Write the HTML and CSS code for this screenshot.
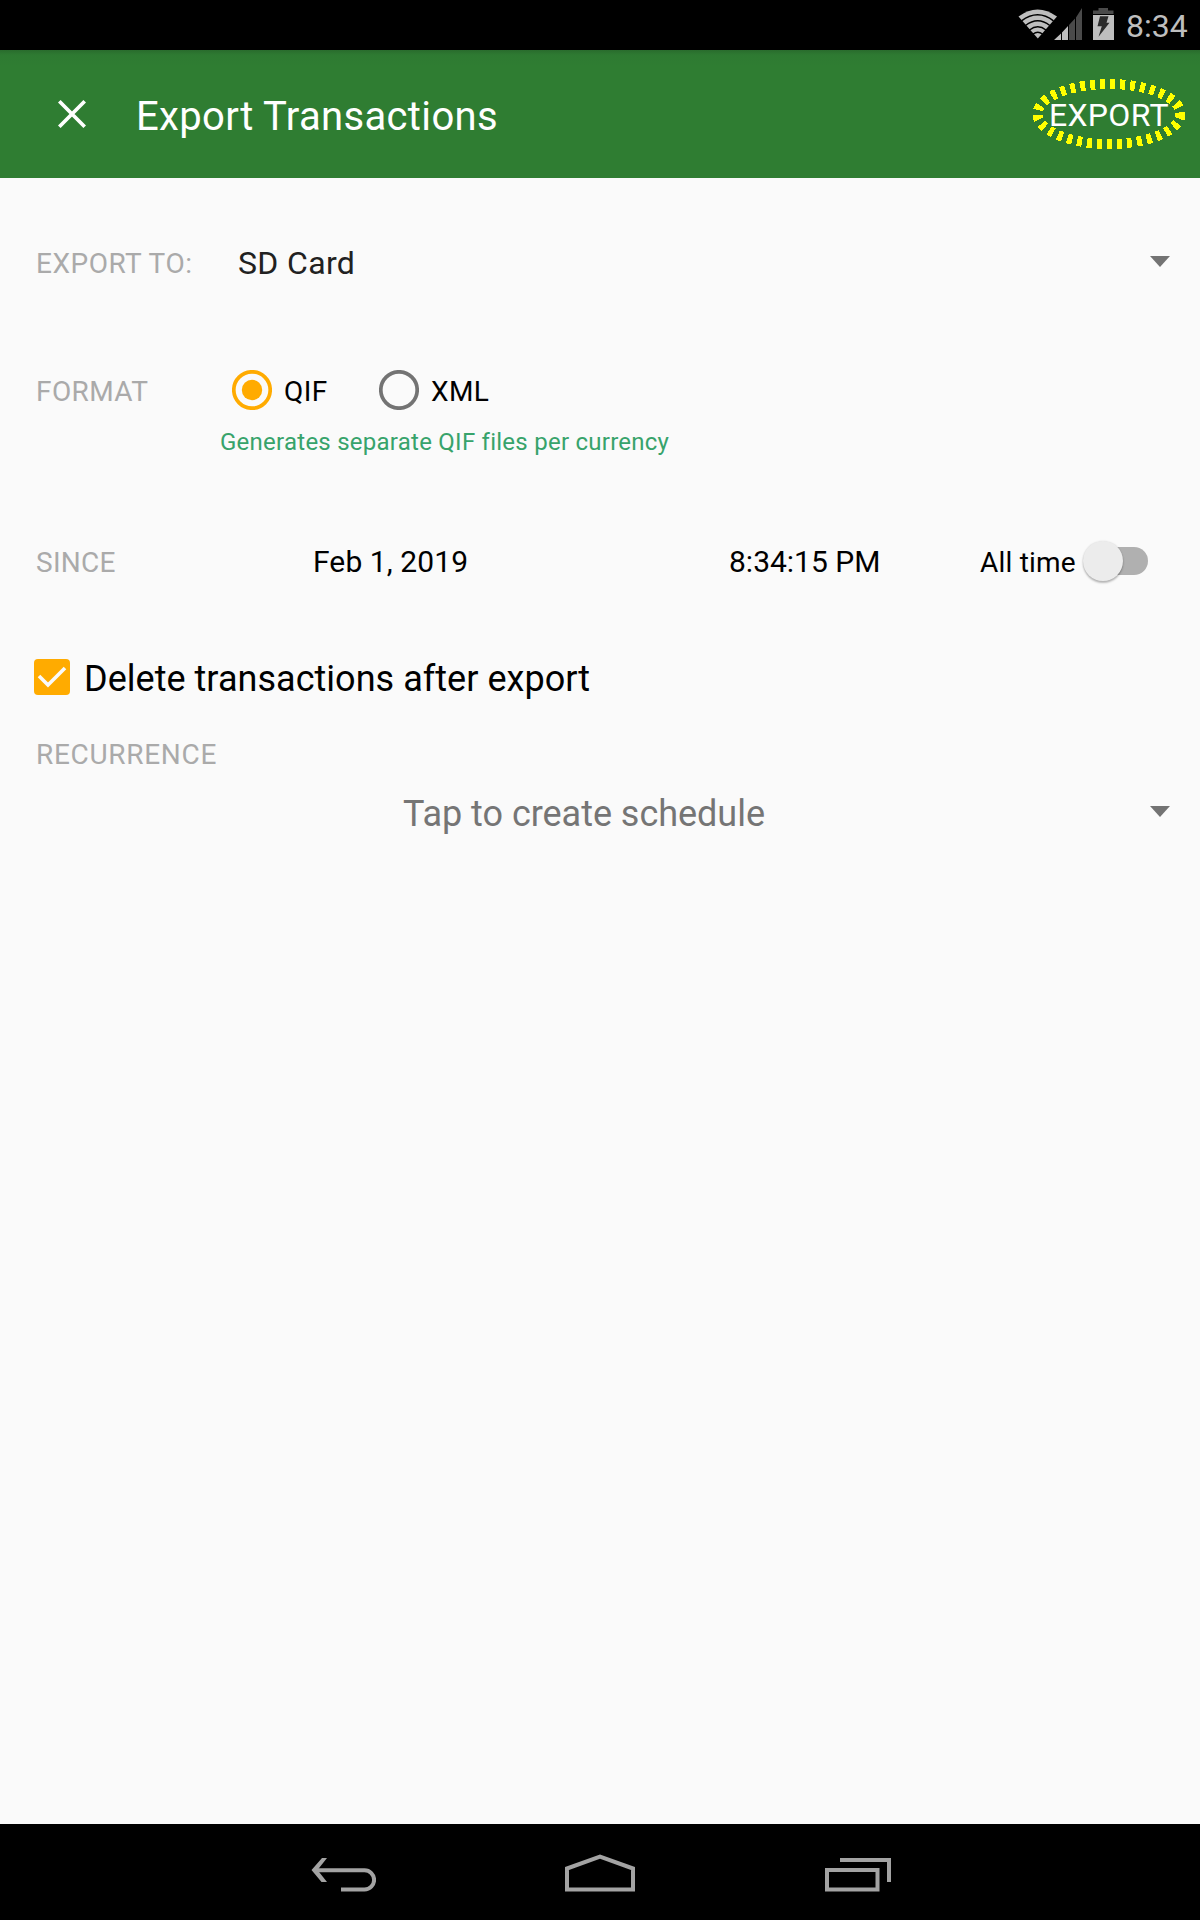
FILE: index.html
```html
<!DOCTYPE html>
<html lang="en">
<head>
<meta charset="utf-8">
<title>Export Transactions</title>
<link rel="stylesheet" href="styles.css">
</head>
<body>
<div class="screen">
  <div class="status-bar">
    <svg class="status-icons" width="100" height="50" viewBox="0 0 100 50">
      <path fill="#bebebe" d="M3.5 16.5Q22.5 2.500 42 16.500L22.800 38.500Z"/>
      <g fill="none" stroke="#000" stroke-width="1.500">
        <path d="M6.500 20.800Q22.800 8.800 38.500 20.800"/>
        <path d="M10.500 25.500Q22.800 16 34.800 25.500"/>
        <path d="M14.500 30Q22.800 23.500 31 30"/>
        <path d="M18 34Q22.800 30.500 27.500 34"/>
      </g>
      <path fill="#bebebe" d="M39 40L46 33.500V40ZM47 40V32.500L53 26V40Z"/>
      <path fill="#4a4a4a" d="M54 40V25L60 18.500V40ZM61 40V17.500L67 8V40Z"/>
      <path fill="#4a4a4a" d="M78 14V10.500H83.500V8H93V10.500H98.500V14Z"/>
      <path fill="#bebebe" d="M78 15H99V40H78Z"/>
      <path fill="#2b2b2b" d="M85 16.300H93.500L91.500 22.700H94.500L83.500 36.700L86.800 26.300H82.500Z"/>
    </svg>
    <span class="clock">8:34</span>
  </div>
  <header class="app-bar">
    <svg class="close" width="28" height="28" viewBox="0 0 28 28"><path d="M1.300 1.300L26.700 26.700M26.700 1.300L1.300 26.700" stroke="#fff" stroke-width="3.700"/></svg>
    <h1 class="title">Export Transactions</h1>
    <div class="action">
      <span class="action-text">EXPORT</span>
      <svg class="ring" width="154" height="72" viewBox="0 0 154 72"><ellipse cx="77" cy="36" rx="71.500" ry="30" fill="none" stroke="#ff0" stroke-width="10" stroke-dasharray="5 5" shape-rendering="crispEdges"/></svg>
    </div>
  </header>
  <main class="form">
    <div class="row row-target">
      <span class="label label-target">EXPORT TO:</span>
      <span class="value-target">SD Card</span>
      <svg class="caret" width="20" height="11" viewBox="0 0 20 11"><path fill="#737373" d="M0 0H20L10 11Z"/></svg>
    </div>
    <div class="row row-format">
      <span class="label label-format">FORMAT</span>
      <svg class="radio" width="40" height="40" viewBox="0 0 40 40"><circle cx="20" cy="20" r="18.200" fill="none" stroke="#ffab00" stroke-width="3.700"/><circle cx="20" cy="20" r="10.200" fill="#ffab00"/></svg>
      <span class="option option-qif">QIF</span>
      <svg class="radio" width="40" height="40" viewBox="0 0 40 40"><circle cx="20" cy="20" r="18.200" fill="none" stroke="#737373" stroke-width="3.700"/></svg>
      <span class="option">XML</span>
    </div>
    <p class="hint">Generates separate QIF files per currency</p>
    <div class="row row-since">
      <span class="label label-since">SINCE</span>
      <span class="date">Feb 1, 2019</span>
      <span class="time">8:34:15 PM</span>
      <span class="all-time">All time</span>
      <span class="switch"><span class="thumb"></span></span>
    </div>
    <div class="row row-delete">
      <svg class="checkbox" width="36" height="36" viewBox="0 0 36 36"><rect width="36" height="36" rx="4" fill="#ffab00"/><path d="M5 17L14 26L31 9" fill="none" stroke="#fafafa" stroke-width="3.600"/></svg>
      <span class="delete-text">Delete transactions after export</span>
    </div>
    <div class="row row-recurrence"><span class="label label-recurrence">RECURRENCE</span></div>
    <div class="row row-schedule">
      <span class="schedule">Tap to create schedule</span>
      <svg class="caret" width="20" height="11" viewBox="0 0 20 11"><path fill="#737373" d="M0 0H20L10 11Z"/></svg>
    </div>
  </main>
  <nav class="nav-bar">
    <svg width="66" height="40" viewBox="0 0 66 40" fill="none" stroke="#a3a3a3" stroke-width="4"><path d="M5 16.300H54.500A9.600 9.600 0 0 1 54.500 35.500H31"/><path fill="#a3a3a3" stroke="none" d="M1.500 16L12 4H17L7.500 16L17 28H11.500Z"/></svg>
    <svg width="72" height="40" viewBox="0 0 72 40" fill="none" stroke="#a3a3a3" stroke-width="4"><path d="M3 35.500V14.500L36 2.700L69 14.500V35.500Z"/></svg>
    <svg width="68" height="40" viewBox="0 0 68 40" fill="none" stroke="#a3a3a3" stroke-width="4"><path d="M3 16H53.500V35.500H3ZM16 6H65V28"/></svg>
  </nav>
</div>
</body>
</html>
```
FILE: styles.css
```css
* { box-sizing: border-box; }
body { margin: 0; background: #fafafa; font-family: Roboto, sans-serif; color: #000; }
svg { display: block; flex: none; }
.screen { width: 1200px; height: 1920px; display: flex; flex-direction: column; white-space: nowrap; overflow: hidden; }

.status-bar { height: 50px; flex: none; background: #000; color: #bebebe; display: flex; padding-left: 1015px; gap: 11px; }
.clock { font-size: 32px; line-height: 52px; }

.app-bar { height: 128px; flex: none; display: flex; align-items: center; color: #fff; padding-left: 58px; background: linear-gradient(#296c2d, #2e7a32 5px, #2f7d32 16px); }
.title { margin: 5px 0 0 50px; font-size: 40px; font-weight: 400; line-height: 48px; letter-spacing: .35px; width: 360px; }
.action { position: relative; margin-left: 553px; padding-top: 2px; }
.action-text { font-size: 32px; line-height: 40px; letter-spacing: .3px; }
.ring { position: absolute; left: -17px; top: -15px; }

.form { flex: 1; display: flex; flex-direction: column; padding-left: 36px; }
.row { display: flex; align-items: center; height: 48px; flex: none; }
.label { color: #aaa; font-size: 28px; letter-spacing: .4px; }
.row-target { margin-top: 61px; padding-right: 30px; }
.label-target { width: 202px; letter-spacing: .5px; }
.value-target { font-size: 32px; color: #212121; letter-spacing: .35px; margin-bottom: 1px; }
.caret { margin-left: auto; margin-bottom: 3px; }
.row-format { margin-top: 80px; }
.label-format { width: 196px; }
.radio { margin-bottom: 2px; }
.option { font-size: 28px; margin-left: 12px; letter-spacing: .4px; }
.option-qif { width: 95px; }
.hint { margin: 13px 0 0 184px; font-size: 24px; line-height: 28px; letter-spacing: .25px; color: #37a36b; }
.row-since { margin-top: 82px; }
.label-since { width: 277px; letter-spacing: .25px; }
.date { font-size: 30px; width: 416px; letter-spacing: .1px; margin-bottom: 2px; }
.time { font-size: 30px; width: 251px; margin-bottom: 2px; }
.all-time { font-size: 28px; width: 106px; letter-spacing: .2px; }
.switch { width: 62px; height: 28px; margin-bottom: 2px; border-radius: 14px; background: #b0b0b0; }
.thumb { display: block; width: 40px; height: 40px; margin: -6px 0 0 -3px; border-radius: 50%; background: #ececec; box-shadow: 0 2px 2px rgba(0,0,0,.25), 0 0 2px rgba(0,0,0,.12); }
.row-delete { margin-top: 68px; margin-left: -2px; }
.checkbox { margin-bottom: 2px; }
.delete-text { font-size: 36px; margin: 2px 0 0 14px; letter-spacing: .03px; }
.row-recurrence { height: 40px; margin-top: 32px; }
.label-recurrence { letter-spacing: .7px; }
.row-schedule { height: 40px; margin-top: 20px; padding-left: 367px; padding-right: 30px; }
.row-schedule .caret { margin-bottom: 5px; }
.schedule { font-size: 36px; color: #757575; letter-spacing: -.03px; }

.nav-bar { height: 96px; flex: none; background: #000; display: flex; align-items: flex-start; padding: 30px 0 0 310px; gap: 188px; }
```
